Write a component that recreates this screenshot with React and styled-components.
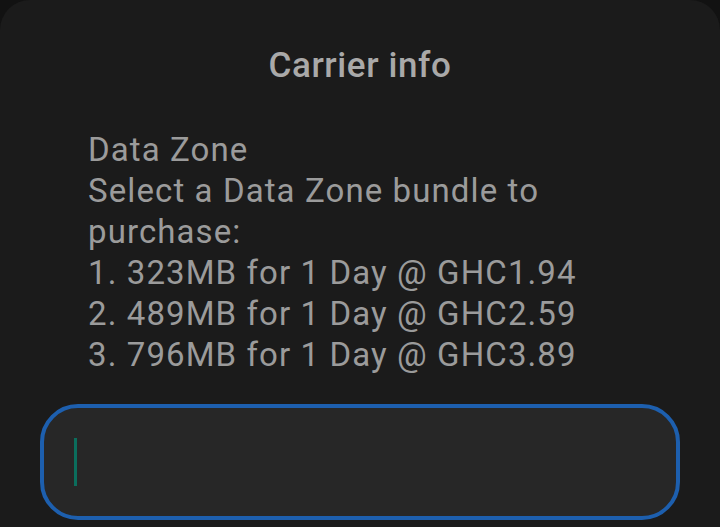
import React from "react";
import styled, { createGlobalStyle } from "styled-components";

const GlobalStyle = createGlobalStyle`
  html, body {
    margin: 0;
    padding: 0;
    background: #121212;
    font-family: Roboto, "Noto Sans", sans-serif;
  }
`;

const Sheet = styled.div`
  width: 720px;
  height: 527px;
  box-sizing: border-box;
  background: #1b1b1b;
  border-radius: 30px 30px 0 0;
  overflow: hidden;
  display: flex;
  flex-direction: column;
`;

const Title = styled.h1`
  margin: 44px 0 0;
  text-align: center;
  font-size: 35px;
  font-weight: 500;
  letter-spacing: 0.6px;
  line-height: 44px;
  color: #a9a9a9;
`;

const Message = styled.div`
  margin: 41px 0 0 88px;
  width: 560px;
  font-size: 33px;
  letter-spacing: 1.1px;
  line-height: 41px;
  color: #9b9b9b;
`;

const Line = styled.div`
  white-space: pre;
`;

const Field = styled.div`
  margin: 29px 40px 0;
  height: 116px;
  box-sizing: border-box;
  border: 4px solid #1d5fae;
  border-radius: 38px;
  background: #272727;
  display: flex;
  align-items: center;
  padding-left: 30px;
`;

const Caret = styled.span`
  width: 3px;
  height: 48px;
  background: #0b6e5d;
`;

const lines = [
  "Data Zone",
  "Select a Data Zone bundle to",
  "purchase:",
  "1. 323MB for 1 Day @ GHC1.94",
  "2. 489MB for 1 Day @ GHC2.59",
  "3. 796MB for 1 Day @ GHC3.89",
];

export default function App() {
  return (
    <>
      <GlobalStyle />
      <Sheet>
        <Title>Carrier info</Title>
        <Message>
          {lines.map((l) => (
            <Line key={l}>{l}</Line>
          ))}
        </Message>
        <Field>
          <Caret />
        </Field>
      </Sheet>
    </>
  );
}
